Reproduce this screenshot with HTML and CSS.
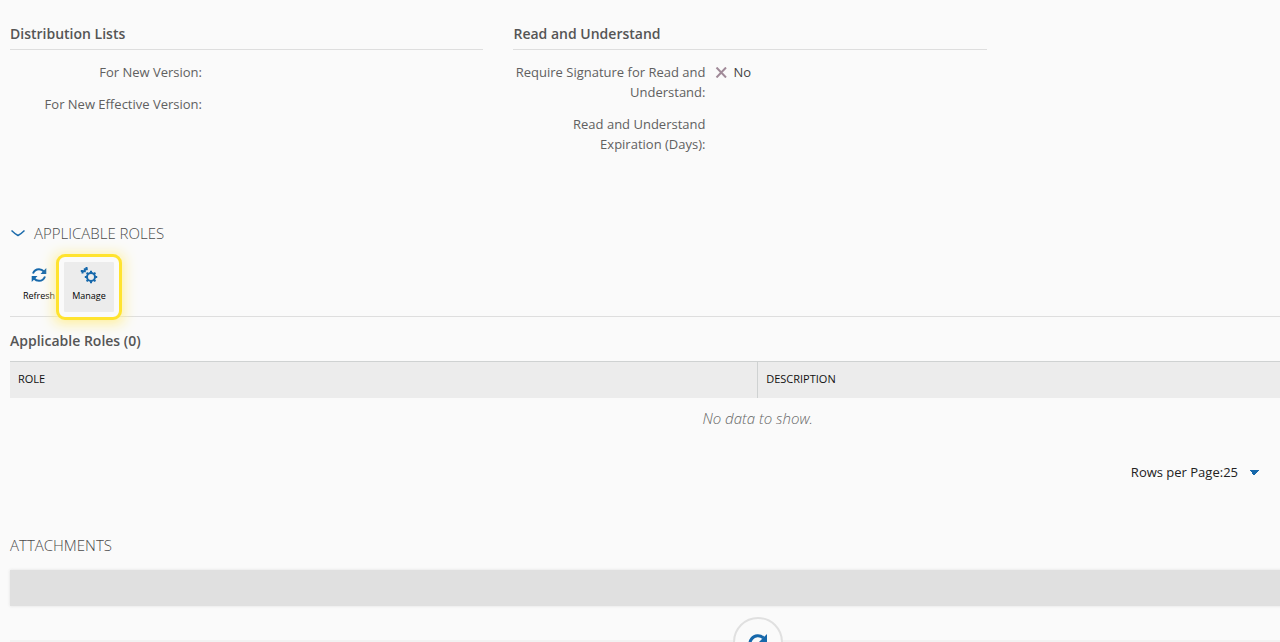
FILE: index.html
```html
<!DOCTYPE html>
<html lang="en">
<head>
  <meta charset="UTF-8">
  <title>Document Details</title>
  <link rel="stylesheet" href="styles.css">
</head>
<body>

  <main class="content">

    <div class="form-columns">
      <section class="form-group">
        <h3>Distribution Lists</h3>
        <dl>
          <dt>For New Version:</dt>
          <dd></dd>
          <dt>For New Effective Version:</dt>
          <dd></dd>
        </dl>
      </section>

      <section class="form-group">
        <h3>Read and Understand</h3>
        <dl>
          <dt>Require Signature for Read and Understand:</dt>
          <dd>
            <svg class="cross" width="12" height="11" viewBox="0 0 12 11"><path d="M1.500 .5l9.500 10M11 .5l-9.500 10"/></svg>
            No
          </dd>
          <dt>Read and Understand Expiration (Days):</dt>
          <dd></dd>
        </dl>
      </section>
    </div>

    <section class="roles">
      <h2>
        <button class="toggle" type="button" aria-label="Collapse section">
          <svg width="14" height="8" viewBox="0 0 14 8"><path d="M.5 1.500Q4 5 7 6.500Q10 5 13.500 1.500"/></svg>
        </button>
        APPLICABLE ROLES
      </h2>

      <div class="toolbar">
        <button class="tool" type="button">
          <svg width="16" height="16" viewBox="0 0 16 16">
            <path class="line" d="M2 6.500C3 3.800 5.300 2.200 8 2.200c2 0 3.600.8 4.900 2.300M14 9.500c-1 2.700-3.300 4.300-6 4.300-2 0-3.600-.8-4.900-2.300"/>
            <path class="fill" d="M15.300 1v6H9.500zM.7 15V9h5.800z"/>
          </svg>
          <span>Refresh</span>
        </button>
        <button class="tool active" type="button">
          <svg width="18" height="18" viewBox="0 0 18 18">
            <circle class="line" cx="11" cy="11" r="4"/>
            <path class="teeth" d="M11 4.800v2M11 15.200v2M4.800 11h2M15.200 11h2M6.600 6.600l1.400 1.400M14 14l1.400 1.400M6.600 15.400l1.400-1.400M14 8l1.400-1.400"/>
            <path class="line" d="M2.500 7.500V5.300H4.800V3.200H7.500"/>
            <path class="teeth" d="M.8 5h2M6.500 1v3"/>
          </svg>
          <span>Manage</span>
        </button>
      </div>

      <h4>Applicable Roles (0)</h4>
      <table>
        <thead>
          <tr>
            <th>ROLE</th>
            <th>DESCRIPTION</th>
          </tr>
        </thead>
        <tbody>
          <tr>
            <td colspan="2">No data to show.</td>
          </tr>
        </tbody>
      </table>
    </section>

    <div class="pager">
      <label for="rows">Rows per Page:</label>
      <select id="rows">
        <option>25</option>
        <option>50</option>
        <option>100</option>
      </select>
    </div>

    <section class="attachments">
      <h2>ATTACHMENTS</h2>
      <div class="placeholder"></div>
      <div class="loader">
        <button class="reload" type="button" aria-label="Reload">
          <svg width="22" height="22" viewBox="0 0 22 22">
            <path class="line" d="M18 14.500A8 8 0 1 1 16.500 5"/>
            <path class="fill" d="M20 1v8h-8z"/>
          </svg>
        </button>
      </div>
    </section>

  </main>

</body>
</html>
```
FILE: styles.css
```css
* {
  box-sizing: border-box;
}

html {
  height: 100%;
  overflow: hidden;
}

body {
  margin: 0;
  height: 100%;
  overflow: hidden;
  background: #fafafa;
  color: #4a4a4a;
  font-family: "Open Sans", sans-serif;
  font-size: 13px;
  line-height: 20px;
}

button,
select {
  font: inherit;
  color: inherit;
  background: none;
  border: none;
  padding: 0;
  cursor: pointer;
}

h2, h3, h4, dl, dd {
  margin: 0;
}

/* the record form is wider than the window */
.content {
  width: 118%;
  padding: 24px 5px 0 10px;
}

/* form */
.form-columns {
  display: grid;
  grid-template-columns: repeat(3, 1fr);
  gap: 30px;
  padding-right: 15px;
}

.form-group h3 {
  padding-bottom: 5px;
  border-bottom: 1px solid #dedede;
  color: #555;
  font-size: 14px;
  font-weight: 600;
}

.form-group dl {
  display: grid;
  grid-template-columns: 192px 1fr;
  gap: 12px 10px;
  padding-top: 12px;
}

.form-group dt {
  color: #606060;
  text-align: right;
}

.form-group dd {
  display: flex;
  align-items: flex-start;
  gap: 6px;
  color: #444;
}

.cross {
  margin-top: 5px;
  fill: none;
  stroke: #a08a98;
  stroke-width: 2;
}

/* sections */
h2 {
  display: flex;
  align-items: center;
  font-size: 15px;
  font-weight: 300;
}

.roles {
  padding-top: 69px;
}

.toggle {
  display: flex;
  margin: 0 9px 0 1px;
}

.toggle svg {
  fill: none;
  stroke: #1a6aab;
  stroke-width: 1.5;
}

.toolbar {
  display: flex;
  padding: 19px 0 4px 4px;
  border-bottom: 1px solid #dedede;
}

.tool {
  display: flex;
  flex-direction: column;
  align-items: center;
  width: 50px;
  height: 50px;
  padding-top: 4px;
  color: #000;
  font-size: 9px;
  line-height: 12px;
}

.tool svg {
  height: 18px;
  margin-bottom: 6px;
}

.line,
.teeth {
  fill: none;
  stroke: #1668ab;
  stroke-width: 2;
}

.fill {
  fill: #1668ab;
}

.active {
  background: #ececec;
  outline: 3px solid #ffe32e;
  outline-offset: 5px;
  border-radius: 1px;
  box-shadow: 0 0 0 5px #fafafa, 0 2px 14px 9px #ffee90;
}

/* roles table */
h4 {
  padding: 14px 0 10px;
  color: #555;
  font-size: 14px;
  font-weight: 600;
}

table {
  width: 100%;
  border-collapse: collapse;
  table-layout: fixed;
}

th {
  height: 36px;
  padding: 0 8px 2px;
  background: #ececec;
  border-top: 1px solid #cfd2d2;
  color: #111;
  font-size: 11px;
  font-weight: 400;
  text-align: left;
}

th + th {
  border-left: 1px solid #cfd2d2;
}

td {
  padding: 10px 0;
  color: #666;
  font-size: 15px;
  font-style: italic;
  font-weight: 300;
  text-align: center;
}

.pager {
  display: flex;
  justify-content: flex-end;
  width: 84%;
  padding-top: 24px;
  color: #222;
}

.pager select {
  width: 43px;
  appearance: none;
  background:
    linear-gradient(to bottom left, #1668ab 50%, transparent 50%) 26px 8px / 5px 5px no-repeat,
    linear-gradient(to bottom right, #1668ab 50%, transparent 50%) 31px 8px / 5px 5px no-repeat;
}

/* attachments */
.attachments {
  padding-top: 53px;
}

.placeholder {
  height: 36px;
  margin-top: 15px;
  background: #e0e0e0;
  box-shadow: 0 0 3px #e0e0e0;
}

.loader {
  display: flex;
  justify-content: center;
  padding-top: 11px;
  background: linear-gradient(#f2f2f2, #f2f2f2) 0 34px / 100% 2px no-repeat;
}

.reload {
  display: flex;
  justify-content: center;
  width: 50px;
  height: 50px;
  padding-top: 14px;
  background: #fafafa;
  border: 2px solid #e0e0e0;
  border-radius: 50%;
}

.reload .line {
  stroke-width: 3;
}
```
